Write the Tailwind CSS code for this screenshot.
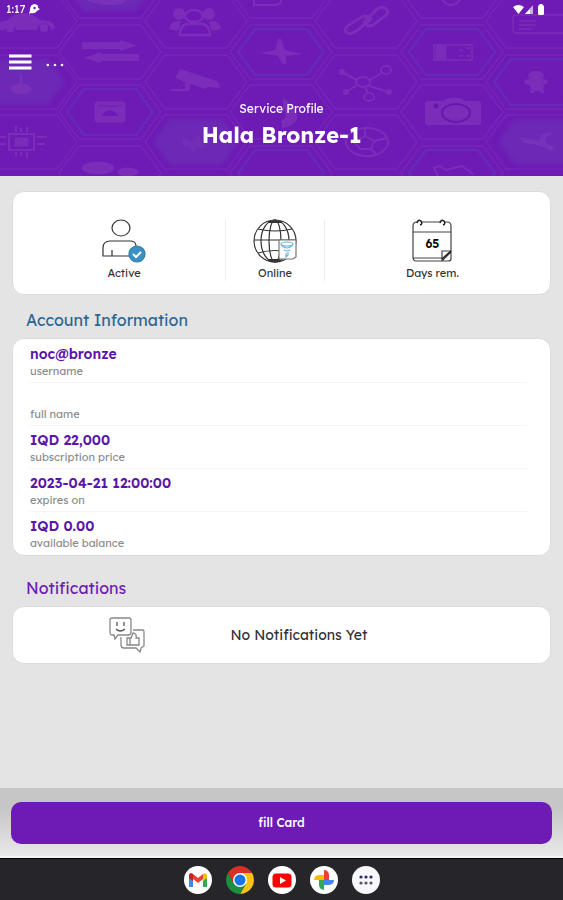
<!DOCTYPE html>
<html lang="en">
<head>
<meta charset="utf-8">
<meta name="viewport" content="width=device-width, initial-scale=1">
<title>Service Profile</title>
<script src="https://cdn.jsdelivr.net/npm/@tailwindcss/browser@4"></script>
</head>
<body class="flex min-h-screen flex-col bg-[#e4e4e4] font-['Lexend','Inter',sans-serif] text-[#333]">

<header class="relative h-44 overflow-hidden bg-[#6e1ab5] text-white">
  <svg class="absolute inset-0 h-full w-full" viewBox="0 0 563 176" preserveAspectRatio="xMidYMin slice" fill="none" aria-hidden="true">
    <defs>
      <filter id="soft" x="-20%" y="-20%" width="140%" height="140%"><feGaussianBlur stdDeviation="2.5"/></filter>
      <path id="hex" d="M-51 0-31-27H31L51 0 31 27H-31Z"/>
      <path id="inner" d="M-43 0-26-23H26L43 0 26 23H-26Z"/>
    </defs>
    <!-- honeycomb -->
    <g stroke="#8338bd" stroke-opacity=".4" stroke-width="1.3">
      <use href="#hex" x="26" y="21"/><use href="#hex" x="26" y="82"/><use href="#hex" x="26" y="142"/>
      <use href="#hex" x="110" y="-9"/><use href="#hex" x="110" y="52"/><use href="#hex" x="110" y="112"/><use href="#hex" x="110" y="173"/>
      <use href="#hex" x="196" y="21"/><use href="#hex" x="196" y="82"/><use href="#hex" x="196" y="142"/>
      <use href="#hex" x="281" y="-9"/><use href="#hex" x="281" y="52"/><use href="#hex" x="281" y="112"/><use href="#hex" x="281" y="173"/>
      <use href="#hex" x="366" y="21"/><use href="#hex" x="366" y="82"/><use href="#hex" x="366" y="142"/>
      <use href="#hex" x="452" y="-9"/><use href="#hex" x="452" y="52"/><use href="#hex" x="452" y="112"/><use href="#hex" x="452" y="173"/>
      <use href="#hex" x="537" y="21"/><use href="#hex" x="537" y="82"/><use href="#hex" x="537" y="142"/>
    </g>
    <!-- glowing cells -->
    <g fill="#6a32b6" fill-opacity=".65" filter="url(#soft)">
      <use href="#inner" x="22" y="82"/><use href="#inner" x="196" y="142"/><use href="#inner" x="110" y="-12"/><use href="#inner" x="541" y="142"/>
    </g>
    <g stroke="#6434bd" stroke-width="2.5" stroke-opacity=".6">
      <use href="#inner" x="110" y="112"/><use href="#inner" x="281" y="52"/><use href="#inner" x="452" y="52"/><use href="#inner" x="537" y="82"/><use href="#inner" x="281" y="173"/><use href="#inner" x="452" y="173"/>
    </g>
    <!-- cell pictograms -->
    <g fill="#8136bb" stroke="#8136bb" opacity=".7">
      <path stroke="none" d="M0 22 8 20Q14 13 24 13 33 13 40 20 54 20 55 28L51 31A7 7 0 0 0 37 30H17A7 7 0 0 0 4 31L0 30Z"/>
      <circle cx="10" cy="28" r="4"/><circle cx="44" cy="28" r="4"/>
      <path stroke="none" d="M82 42H120V40L137 45.500 120 51V49H82ZM139 54H101V52L84 58 101 63V61H139Z"/>
      <g stroke="none"><circle cx="179" cy="14" r="6"/><circle cx="209" cy="14" r="6"/><path d="M169 29Q170 20 181 21L178 31ZM221 29Q220 20 209 21L212 31Z"/></g>
      <g fill="#6e1ab5" stroke-width="2.500"><ellipse cx="194" cy="16" rx="9" ry="6"/><path d="M180 35Q180 24 188 24H201Q209 24 210 35Z"/></g>
      <path stroke="none" d="M180 69 217 81 221 88 208 87 205 89 191 84 189 91H171V89H185V82L175 78Z"/>
      <rect x="95" y="102" width="30" height="20" rx="2"/><path d="M101 116Q110 105 119 116Z" fill="#6e1ab5" stroke="none"/><path d="M98 106H122" stroke="#6e1ab5"/>
      <path stroke-width="2" d="M21 74V86M15 88Q21 81 28 88"/><ellipse cx="21" cy="89" rx="10" ry="5"/>
      <path fill="none" stroke-width="2" d="M9 134H34V150H9ZM16 132V126M21 132V128M27 132V127M16 152V157M21 152V156M27 152V158M0 137H6M0 144H6M37 137H47M37 144H45"/><rect x="15" y="138" width="13" height="8"/>
      <ellipse cx="98" cy="168" rx="16" ry="6"/><ellipse cx="128" cy="172" rx="10" ry="4"/>
      <path d="M183 137 190 142 200 134 201 142 207 148 196 147 193 153 189 146 182 145Z" stroke="none" opacity=".6"/>
      <path stroke="none" d="M260 53 275 50 278 39H281L285 50 302 54 286 56 286 64H283L278 56Z"/>
      <g fill="none" stroke-width="3"><path d="M364 22 376 10Q382 5 386 9 391 13 382 18L373 25Q368 28 364 22ZM371 19 359 29Q350 36 346 32 343 28 352 23L362 17Q368 15 371 19Z"/></g>
      <g fill="none" stroke-width="2"><ellipse cx="363" cy="82" rx="7" ry="5"/><ellipse cx="386" cy="70" rx="5" ry="4"/><ellipse cx="369" cy="97" rx="5" ry="4"/><path d="M342 72 357 80M370 80 382 73M357 85 346 92M369 86 389 92M365 87 368 93"/></g>
      <g stroke="none"><circle cx="342" cy="72" r="3"/><circle cx="346" cy="92" r="3"/><circle cx="389" cy="92" r="3"/></g>
      <path stroke="none" d="M428 101H443L448 98H460L465 101H478Q481 101 481 104V122Q481 125 478 125H428Q425 125 425 122V104Q425 101 428 101Z"/><ellipse cx="456" cy="113" rx="14" ry="9" fill="none" stroke="#6418ab" stroke-width="2"/><circle cx="436" cy="106" r="2.500" fill="#6418ab" stroke="none"/>
      <path fill="none" stroke-width="1.500" d="M434 45H472V60H434ZM459 50H462M466 48H470M459 56H463M467 56H470"/><path d="M436 46H446V59H436Z"/>
      <path fill="none" stroke-width="1.500" d="M563 15H516Q513 15 513 18V30Q513 33 516 33H563M519 21H536M519 25H536M519 29H532"/>
      <g stroke="none"><ellipse cx="536" cy="76" rx="8" ry="5"/><ellipse cx="536" cy="82" rx="12" ry="4"/><ellipse cx="537" cy="87" rx="7" ry="4"/><path d="M531 87 530 93H534L535 88ZM538 88 541 93H545L541 86Z"/></g>
      <g fill="none" stroke-width="2"><ellipse cx="367" cy="142" rx="21" ry="14"/><path d="M355 142 365 136 374 141 371 149H360ZM365 136V129M374 141 387 138M371 149 376 154"/></g>
      <path stroke="none" d="M520 137 530 139 539 141Q540 131 554 133L545 138 547 144 555 147 552 151 538 145 524 143Z"/>
      <path fill="none" stroke-width="2" d="M433 168 440 166 446 170 462 166 473 174M434 168 438 176M442 0Q452 10 460 0M254 0V5H275Q281 5 281 0"/>
      <path stroke="none" d="M87 0H128Q122 5 108 5 93 4 87 0ZM283 98Q298 108 297 119 295 126 282 128V120Q289 116 283 110Z"/>
    </g>
  </svg>
  <div class="relative flex h-full flex-col">
    <div class="flex h-[18px] items-center justify-between pl-[6px] pr-[18px]">
      <div class="flex items-center gap-1 text-[11px] leading-4">
        <span>1:17</span>
        <svg class="h-[10px] w-[11px]" viewBox="0 0 11 10" aria-hidden="true"><path fill="#fff" d="M2 9 0 10 1 6Q1 0 6 0 10 1 9 4L11 5 8 7Q6 10 2 9Z"/><circle cx="5.500" cy="4" r="1.200" fill="#6e1ab5"/></svg>
      </div>
      <svg class="h-[11px] w-8" viewBox="0 0 32 11" fill="#fff" aria-hidden="true"><path d="M0 3Q5-1 11 3L5.500 10Z"/><path d="M12 10 20 1V10Z" fill-opacity=".65"/><path d="M12 10 17 5V10Z"/><rect x="25" y="1" width="6" height="10" rx="1.500"/><rect x="26.500" y="0" width="3" height="2"/></svg>
    </div>
    <div class="mt-9 flex h-4 items-center gap-[14px] pl-[9px]">
      <button aria-label="Open menu"><svg class="block h-4 w-[23px]" viewBox="0 0 23 16" aria-hidden="true"><path d="M0 2H22.500M0 8H22.500M0 14H22.500" stroke="#fff" stroke-width="3"/></svg></button>
      <button aria-label="More options"><svg class="block h-4 w-5" viewBox="0 0 20 16" fill="#fff" aria-hidden="true"><circle cx="1.800" cy="11" r="1.300"/><circle cx="9" cy="11" r="1.300"/><circle cx="16" cy="11" r="1.300"/></svg></button>
    </div>
    <div class="mt-[31px] text-center">
      <p class="text-xs leading-4">Service Profile</p>
      <h1 class="mt-1 text-[22px] font-bold leading-7">Hala Bronze-1</h1>
    </div>
  </div>
</header>

<main class="flex-1 px-3 pt-[15px]">
  <section aria-label="Status" class="grid h-[104px] grid-cols-[204fr_99fr_216fr] items-center rounded-xl border border-[#dcdcdc] bg-white px-[10px] pt-[14px] text-center text-[11px] leading-4">
    <div class="flex h-[62px] flex-col items-center gap-[2px] border-r border-[#efefef]">
      <svg class="h-11 w-11" viewBox="0 0 44 44" fill="none" stroke="#333" stroke-width="1.200" aria-hidden="true"><ellipse cx="19" cy="9" rx="9" ry="8"/><path d="M28 37H1V29Q1 22 8 22H28Q34 22 34 27M10 31V37"/><circle cx="35" cy="35" r="8" fill="#3a91c3" stroke="#2e7eac"/><path d="M31 35 34 38 39 33" stroke="#fff" stroke-width="2"/></svg>
      <span>Active</span>
    </div>
    <div class="flex h-[62px] flex-col items-center gap-[2px] border-r border-[#efefef]">
      <svg class="h-11 w-11" viewBox="0 0 44 44" fill="none" stroke="#333" stroke-width="1.200" aria-hidden="true"><circle cx="22" cy="22" r="21"/><ellipse cx="22" cy="22" rx="14" ry="21"/><ellipse cx="22" cy="22" rx="6" ry="21"/><path d="M1 21H43M5 10Q22 14 39 10M5 34Q22 29 39 34"/><path d="M15 3H29M15 41H27" stroke-width="2"/><path d="M26 21H43V38L40 40H26Z" fill="#fff" stroke="#777"/><g stroke="#69b2d8"><ellipse cx="34" cy="25" rx="6" ry="2"/><path d="M29 27Q34 31 39 27M31 31Q34 33 37 31M33 34V38L35 36V33"/></g></svg>
      <span>Online</span>
    </div>
    <div class="flex h-[62px] flex-col items-center gap-[2px]">
      <div class="relative h-11 w-11">
        <svg class="h-11 w-11" viewBox="0 0 44 44" fill="none" stroke="#444" stroke-width="1.200" aria-hidden="true"><path d="M11 3H30M35 3H37Q41 3 41 7V33L32 42H6Q3 42 3 38V7Q3 3 7 3M3 13H41M3 39H32M32 42V32H41V40Q41 42 38 42H32"/><path d="M32 40 41 32" stroke="#222" stroke-width="1.600"/><path d="M7 4Q8 0 11 2 13 5 10 6M30 4Q31 0 34 2 36 5 33 6" stroke="#222" stroke-width="1.500"/></svg>
        <span class="absolute inset-x-0 top-[17px] text-xs font-semibold leading-4 text-black">65</span>
      </div>
      <span>Days rem.</span>
    </div>
  </section>

  <h2 class="mt-[13px] pl-[14px] text-base leading-6 text-[#2a6795]">Account Information</h2>
  <dl class="mt-[6px] rounded-xl border border-[#dcdcdc] bg-white pl-[17px] pr-[23px] pt-px">
    <div class="flex h-[43px] flex-col-reverse justify-end border-b border-[#f5f5f5] pt-[5px]"><dt class="text-[11px] leading-[14px] text-[#8b8b8b]">username</dt><dd class="h-[19px] text-sm font-semibold leading-[19px] text-[#5a16a8]">noc@bronze</dd></div>
    <div class="flex h-[43px] flex-col-reverse justify-end border-b border-[#f5f5f5] pt-[5px]"><dt class="text-[11px] leading-[14px] text-[#8b8b8b]">full name</dt><dd class="h-[19px] text-sm font-semibold leading-[19px] text-[#5a16a8]"></dd></div>
    <div class="flex h-[43px] flex-col-reverse justify-end border-b border-[#f5f5f5] pt-[5px]"><dt class="text-[11px] leading-[14px] text-[#8b8b8b]">subscription price</dt><dd class="h-[19px] text-sm font-semibold leading-[19px] text-[#5a16a8]">IQD 22,000</dd></div>
    <div class="flex h-[43px] flex-col-reverse justify-end border-b border-[#f5f5f5] pt-[5px]"><dt class="text-[11px] leading-[14px] text-[#8b8b8b]">expires on</dt><dd class="h-[19px] text-sm font-semibold leading-[19px] text-[#5a16a8]">2023-04-21 12:00:00</dd></div>
    <div class="flex h-[43px] flex-col-reverse justify-end pt-[5px]"><dt class="text-[11px] leading-[14px] text-[#8b8b8b]">available balance</dt><dd class="h-[19px] text-sm font-semibold leading-[19px] text-[#5a16a8]">IQD 0.00</dd></div>
  </dl>

  <h2 class="mt-5 pl-[14px] text-base leading-6 text-[#6e1ab5]">Notifications</h2>
  <section aria-label="Notifications" class="mt-[6px] grid h-[58px] grid-cols-[208fr_136fr_183fr] items-center rounded-xl border border-[#dcdcdc] bg-white pl-[10px]">
    <svg class="h-9 w-9 justify-self-center" viewBox="0 0 36 36" fill="none" stroke="#888" stroke-width="1.300" aria-hidden="true"><path d="M3 1H20Q22 1 22 3V15Q22 18 19 18H9L6 22 5 18H3Q1 18 1 15V3Q1 1 3 1Z"/><path d="M8 5V9M15 5V9M7 12Q11 16 16 12" stroke="#555"/><path d="M24 13H34Q35 13 35 15V29L32 31 31 35 27 31H15Q12 31 12 28V20M18 21H22L24 16Q28 16 27 21H30V28H18ZM21 21V28"/></svg>
    <p class="whitespace-nowrap text-center text-sm leading-5">No Notifications Yet</p>
  </section>
</main>

<footer>
  <div class="border-b-2 border-[#f4f4f4] bg-linear-to-b from-[#c6c6c6] from-30% to-[#e9e9e9] px-[11px] pb-3 pt-[14px]">
    <button class="block h-[42px] w-full rounded-[10px] bg-[#6e1ab5] text-xs font-medium text-white">fill Card</button>
  </div>
  <nav aria-label="Apps" class="flex h-[42px] items-center justify-center gap-[14px] border-t border-black bg-[#25252a]">
    <a href="#" aria-label="Gmail"><svg class="block size-7" viewBox="0 0 28 28" aria-hidden="true"><circle cx="14" cy="14" r="14" fill="#fff"/><path d="M5 9V21H9V12Z" fill="#4285f4"/><path d="M23 9V21H19V12Z" fill="#34a853"/><path d="M5 12V9Q6 6 9 8L14 12 19 8V13L14 17 9 13V15Z" fill="#ea4335"/><path d="M5 12V9Q6 6 9 8V15Z" fill="#c5221f"/><path d="M19 8Q22 6 23 9V12L19 15Z" fill="#fbbc04"/></svg></a>
    <a href="#" aria-label="Chrome"><svg class="block size-7" viewBox="0 0 28 28" aria-hidden="true"><path d="M14 14V7H26.100A14 14 0 0 1 14 28L20 17.500Z" fill="#fbc116"/><path d="M14 14 20 17.500 14 28A14 14 0 0 1 1.900 7L8 17.500Z" fill="#1e8e3e"/><path d="M1.900 7A14 14 0 0 1 26.100 7H14L8 17.500Z" fill="#d93025"/><circle cx="14" cy="14" r="7" fill="#fff"/><circle cx="14" cy="14" r="5.500" fill="#1a73e8"/></svg></a>
    <a href="#" aria-label="YouTube"><svg class="block size-7" viewBox="0 0 28 28" aria-hidden="true"><circle cx="14" cy="14" r="14" fill="#fff"/><rect x="4.500" y="7.500" width="19" height="14" rx="3.500" fill="#f00"/><path d="M12 11V18L18 14.500Z" fill="#fff"/></svg></a>
    <a href="#" aria-label="Photos"><svg class="block size-7" viewBox="0 0 28 28" aria-hidden="true"><circle cx="14" cy="14" r="14" fill="#fff"/><path d="M14 14V4A5 5 0 0 1 19 9V14Z" fill="#ea4335"/><path d="M14 14H24A5 5 0 0 1 19 19H14Z" fill="#4285f4"/><path d="M14 14V24A5 5 0 0 1 9 19V14Z" fill="#34a853"/><path d="M14 14H4A5 5 0 0 1 9 9H14Z" fill="#fbbc04"/></svg></a>
    <button aria-label="All apps"><svg class="block size-7" viewBox="0 0 28 28" aria-hidden="true"><circle cx="14" cy="14" r="14" fill="#f8f8fc"/><g fill="#28286d"><circle cx="9" cy="11" r="1.600"/><circle cx="14" cy="11" r="1.600"/><circle cx="19" cy="11" r="1.600"/></g><g fill="#55556a"><circle cx="9" cy="17" r="1.600"/><circle cx="14" cy="17" r="1.600"/><circle cx="19" cy="17" r="1.600"/></g></svg></button>
  </nav>
</footer>
</body>
</html>
